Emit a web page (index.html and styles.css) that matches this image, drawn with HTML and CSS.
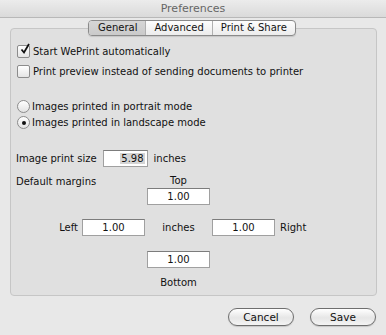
FILE: index.html
```html
<!DOCTYPE html>
<html lang="en">
<head>
    <meta charset="UTF-8">
    <title>Preferences</title>
    <link rel="stylesheet" href="styles.css">
</head>
<body>
    <div class="window">
        <div class="titlebar">Preferences</div>
        <div class="tabs">
            <span class="tab active">General</span>
            <span class="tab">Advanced</span>
            <span class="tab">Print &amp; Share</span>
        </div>
        <div class="group">
            <label class="check-row">
                <span class="checkbox checked">
                    <svg width="12" height="12" viewBox="0 0 12 12"><path d="M2.5 6.5 L5 9.5 L10 1" fill="none" stroke="#111" stroke-width="1.8"/></svg>
                </span>
                Start WePrint automatically
            </label>
            <label class="check-row">
                <span class="checkbox"></span>
                Print preview instead of sending documents to printer
            </label>

            <div class="radios">
                <label class="radio-row"><span class="radio"></span>Images printed in portrait mode</label>
                <label class="radio-row"><span class="radio selected"></span>Images printed in landscape mode</label>
            </div>

            <div class="size-row">
                <span>Image print size</span>
                <span class="field size-field"><span class="sel">5.98</span></span>
                <span>inches</span>
            </div>

            <div class="margins">
                <span class="m-title">Default margins</span>
                <span class="m-center m-top">Top</span>
                <span class="field m-center m-topfield">1.00</span>
                <span class="m-left">Left</span>
                <span class="field m-leftfield">1.00</span>
                <span class="m-center m-inches">inches</span>
                <span class="field m-rightfield">1.00</span>
                <span class="m-right">Right</span>
                <span class="field m-center m-bottomfield">1.00</span>
                <span class="m-center m-bottom">Bottom</span>
            </div>
        </div>
        <div class="buttons">
            <button class="btn">Cancel</button>
            <button class="btn">Save</button>
        </div>
    </div>
</body>
</html>
```

FILE: styles.css
```css
html, body {
    margin: 0;
    padding: 0;
}
body {
    font-family: "DejaVu Sans", sans-serif;
    font-size: 10px;
    color: #111;
    background: #e8e8e8;
}
.window {
    width: 386px;
    height: 335px;
    background: #e8e8e8;
    display: flex;
    flex-direction: column;
}
.titlebar {
    height: 18px;
    line-height: 18px;
    text-align: center;
    color: #666;
    font-size: 11px;
    background: linear-gradient(#ececec, #dadada);
    border-bottom: 1px solid #b8b8b8;
    box-sizing: border-box;
}
.tabs {
    align-self: flex-start;
    margin: 2px 0 -8px 88px;
    display: flex;
    height: 16px;
    border: 1px solid #8a8a8a;
    border-radius: 4px;
    overflow: hidden;
    position: relative;
    z-index: 1;
    box-sizing: border-box;
    background: linear-gradient(#fdfdfd, #ececec);
    box-shadow: 0 1px 1px rgba(0, 0, 0, 0.12);
}
.tab {
    padding: 0 8px;
    line-height: 14px;
    font-size: 10px;
    border-left: 1px solid #b0b0b0;
}
.tab:first-child {
    border-left: none;
}
.tab.active {
    background: linear-gradient(#d6d6d6, #cacaca);
    padding: 0 8px 0 9px;
}
.group {
    margin: 0 9px 0 10px;
    height: 268px;
    box-sizing: border-box;
    border: 1px solid #c6c6c6;
    border-radius: 4px;
    background: #e0e0e0;
    padding: 12px 5px 0 5px;
    display: flex;
    flex-direction: column;
}
.check-row {
    display: flex;
    align-items: center;
    gap: 3px;
    height: 20px;
}
.checkbox {
    width: 11px;
    height: 11px;
    border: 1px solid #8c8c8c;
    border-radius: 2px;
    background: linear-gradient(#ffffff, #e4e4e4);
    position: relative;
    margin-left: 1px;
}
.checkbox svg {
    position: absolute;
    left: 1px;
    top: -3px;
}
.radios {
    margin-top: 17px;
}
.radio-row {
    display: flex;
    align-items: center;
    gap: 2px;
    height: 16px;
}
.radio {
    width: 11px;
    height: 11px;
    border: 1px solid #8c8c8c;
    border-radius: 50%;
    background: linear-gradient(#ffffff, #e2e2e2);
    position: relative;
    margin-left: 1px;
}
.radio.selected::after {
    content: "";
    position: absolute;
    left: 4px;
    top: 4px;
    width: 4px;
    height: 4px;
    border-radius: 50%;
    background: #111;
}
.size-row {
    display: flex;
    align-items: center;
    margin-top: 20px;
    gap: 6px;
}
.field {
    display: block;
    height: 17px;
    line-height: 16px;
    box-sizing: border-box;
    background: #fff;
    border: 1px solid #a0a0a0;
    border-top-color: #7c7c7c;
    text-align: center;
}
.size-field {
    width: 45px;
    text-align: right;
    padding-right: 2px;
}
.sel {
    background: #d4d4d4;
    padding: 0 1px;
}
.margins {
    display: grid;
    grid-template-columns: 66px 63px 67px 63px auto;
    grid-template-rows: 15px 17px 31px 32px 21px;
    align-items: center;
    margin-top: 6px;
}
.m-title {
    grid-column: 1 / 3;
    grid-row: 1;
    line-height: 12px;
    margin-top: 2px;
}
.m-center {
    grid-column: 3;
    justify-self: center;
}
.m-top { grid-row: 1; }
.m-topfield { grid-row: 2; width: 63px; }
.m-left {
    grid-row: 3;
    grid-column: 1;
    justify-self: end;
    padding-right: 4px;
    align-self: end;
    line-height: 17px;
}
.m-leftfield { grid-row: 3; grid-column: 2; align-self: end; }
.m-inches { grid-row: 3; align-self: end; line-height: 17px; }
.m-rightfield { grid-row: 3; grid-column: 4; align-self: end; }
.m-right {
    grid-row: 3;
    grid-column: 5;
    padding-left: 5px;
    align-self: end;
    line-height: 17px;
}
.m-bottomfield { grid-row: 4; width: 63px; align-self: end; }
.m-bottom { grid-row: 5; align-self: end; line-height: 12px; }
.buttons {
    display: flex;
    justify-content: flex-end;
    gap: 16px;
    margin: 12px 10px 0 0;
}
.btn {
    width: 66px;
    height: 18px;
    padding: 0;
    font-family: "DejaVu Sans", sans-serif;
    font-size: 10.5px;
    color: #111;
    border: 1px solid #6e6e6e;
    border-radius: 9px;
    background: linear-gradient(#ffffff, #e6e6e6 55%, #f4f4f4);
    box-shadow: 0 1px 1px rgba(0, 0, 0, 0.15);
}
```
